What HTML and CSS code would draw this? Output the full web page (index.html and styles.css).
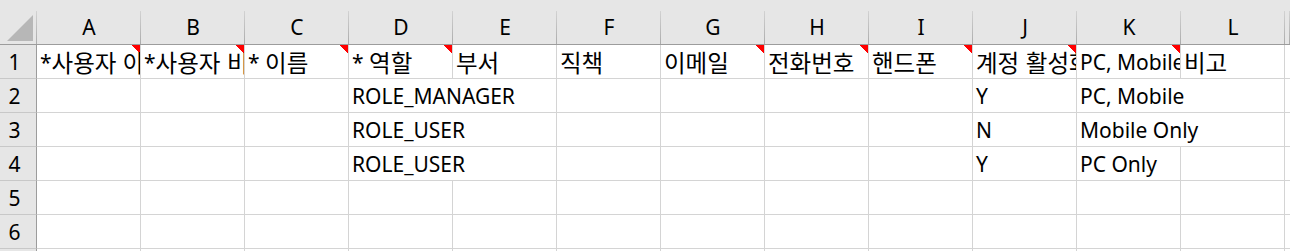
FILE: index.html
```html
<!DOCTYPE html>
<html lang="ko">
<head>
<meta charset="utf-8">
<title>Sheet</title>
<link rel="stylesheet" href="styles.css">
</head>
<body>
<div class="sheet">
  <div class="hd corner"><svg class="selall" width="37" height="44" viewBox="0 0 37 44"><polygon points="7,41 33,41 33,15" fill="#b7b7b7"/></svg></div>
  <div class="hd">A</div><div class="hd">B</div><div class="hd">C</div><div class="hd">D</div>
  <div class="hd">E</div><div class="hd">F</div><div class="hd">G</div><div class="hd">H</div>
  <div class="hd">I</div><div class="hd">J</div><div class="hd">K</div><div class="hd">L</div>
  <div class="hd hd-rest"></div>

  <div class="rh">1</div>
  <div class="c note">*<span class="ko">사용자 아이디</span></div>
  <div class="c note">*<span class="ko">사용자 비밀번호</span></div>
  <div class="c note">* <span class="ko">이름</span></div>
  <div class="c note">* <span class="ko">역할</span></div>
  <div class="c"><span class="ko">부서</span></div>
  <div class="c"><span class="ko">직책</span></div>
  <div class="c note"><span class="ko">이메일</span></div>
  <div class="c note"><span class="ko">전화번호</span></div>
  <div class="c note"><span class="ko">핸드폰</span></div>
  <div class="c note"><span class="ko">계정 활성화</span></div>
  <div class="c note">PC, Mobile <span class="ko">접근</span></div>
  <div class="c"><span class="ko">비고</span></div>
  <div class="c rest"></div>

  <div class="rh">2</div>
  <div class="c"></div><div class="c"></div><div class="c"></div>
  <div class="c span2">ROLE_MANAGER</div>
  <div class="c"></div><div class="c"></div><div class="c"></div><div class="c"></div>
  <div class="c">Y</div>
  <div class="c span2">PC, Mobile</div>
  <div class="c rest"></div>

  <div class="rh">3</div>
  <div class="c"></div><div class="c"></div><div class="c"></div>
  <div class="c span2">ROLE_USER</div>
  <div class="c"></div><div class="c"></div><div class="c"></div><div class="c"></div>
  <div class="c">N</div>
  <div class="c span2">Mobile Only</div>
  <div class="c rest"></div>

  <div class="rh">4</div>
  <div class="c"></div><div class="c"></div><div class="c"></div>
  <div class="c span2">ROLE_USER</div>
  <div class="c"></div><div class="c"></div><div class="c"></div><div class="c"></div>
  <div class="c">Y</div>
  <div class="c">PC Only</div>
  <div class="c"></div>
  <div class="c rest"></div>

  <div class="rh">5</div>
  <div class="c"></div><div class="c"></div><div class="c"></div><div class="c"></div>
  <div class="c"></div><div class="c"></div><div class="c"></div><div class="c"></div>
  <div class="c"></div><div class="c"></div><div class="c"></div><div class="c"></div>
  <div class="c rest"></div>

  <div class="rh">6</div>
  <div class="c"></div><div class="c"></div><div class="c"></div><div class="c"></div>
  <div class="c"></div><div class="c"></div><div class="c"></div><div class="c"></div>
  <div class="c"></div><div class="c"></div><div class="c"></div><div class="c"></div>
  <div class="c rest"></div>

  <div class="rh">7</div>
  <div class="c"></div><div class="c"></div><div class="c"></div><div class="c"></div>
  <div class="c"></div><div class="c"></div><div class="c"></div><div class="c"></div>
  <div class="c"></div><div class="c"></div><div class="c"></div><div class="c"></div>
  <div class="c rest"></div>
</div>
</body>
</html>
```
FILE: styles.css
```css
html, body {
  margin: 0;
  padding: 0;
  background: #ffffff;
  overflow: hidden;
}

body {
  font-family: "Noto Sans", "Noto Sans CJK KR", sans-serif;
  font-size: 21px;
  line-height: 24px;
  color: #000000;
}

.sheet {
  display: grid;
  grid-template-columns: 37px repeat(12, 104px) 1fr;
  grid-template-rows: 45px repeat(7, 34px);
  width: 1290px;
  height: 251px;
  overflow: hidden;
}

.hd {
  box-sizing: border-box;
  background: #e6e6e6 linear-gradient(#d2d2d2, #ababab) no-repeat right bottom / 1px 33px;
  border-bottom: 1px solid #9c9c9c;
  display: flex;
  justify-content: center;
  align-items: flex-end;
  padding-bottom: 5px;
}

.corner {
  padding: 0;
  align-items: stretch;
  justify-content: flex-start;
}

.selall {
  display: block;
}

.rh {
  box-sizing: border-box;
  background: #e6e6e6;
  border-right: 1px solid #9c9c9c;
  border-bottom: 1px solid #c8c8c8;
  display: flex;
  justify-content: center;
  align-items: flex-end;
  padding-right: 7px;
  padding-bottom: 4px;
}

.c {
  box-sizing: border-box;
  border-right: 1px solid #d4d4d4;
  border-bottom: 1px solid #d4d4d4;
  white-space: pre;
  overflow: hidden;
  display: flex;
  align-items: flex-end;
  padding-left: 3px;
  padding-bottom: 4px;
  min-width: 0;
}

.ko {
  font-family: "Noto Sans CJK KR", sans-serif;
  font-size: 23.5px;
}

.span2 {
  grid-column: span 2;
}

.rest {
  border-right: none;
}

.note {
  background: linear-gradient(to bottom left, #ff0000 50%, transparent 50%) no-repeat right top / 8px 8px;
}
```
